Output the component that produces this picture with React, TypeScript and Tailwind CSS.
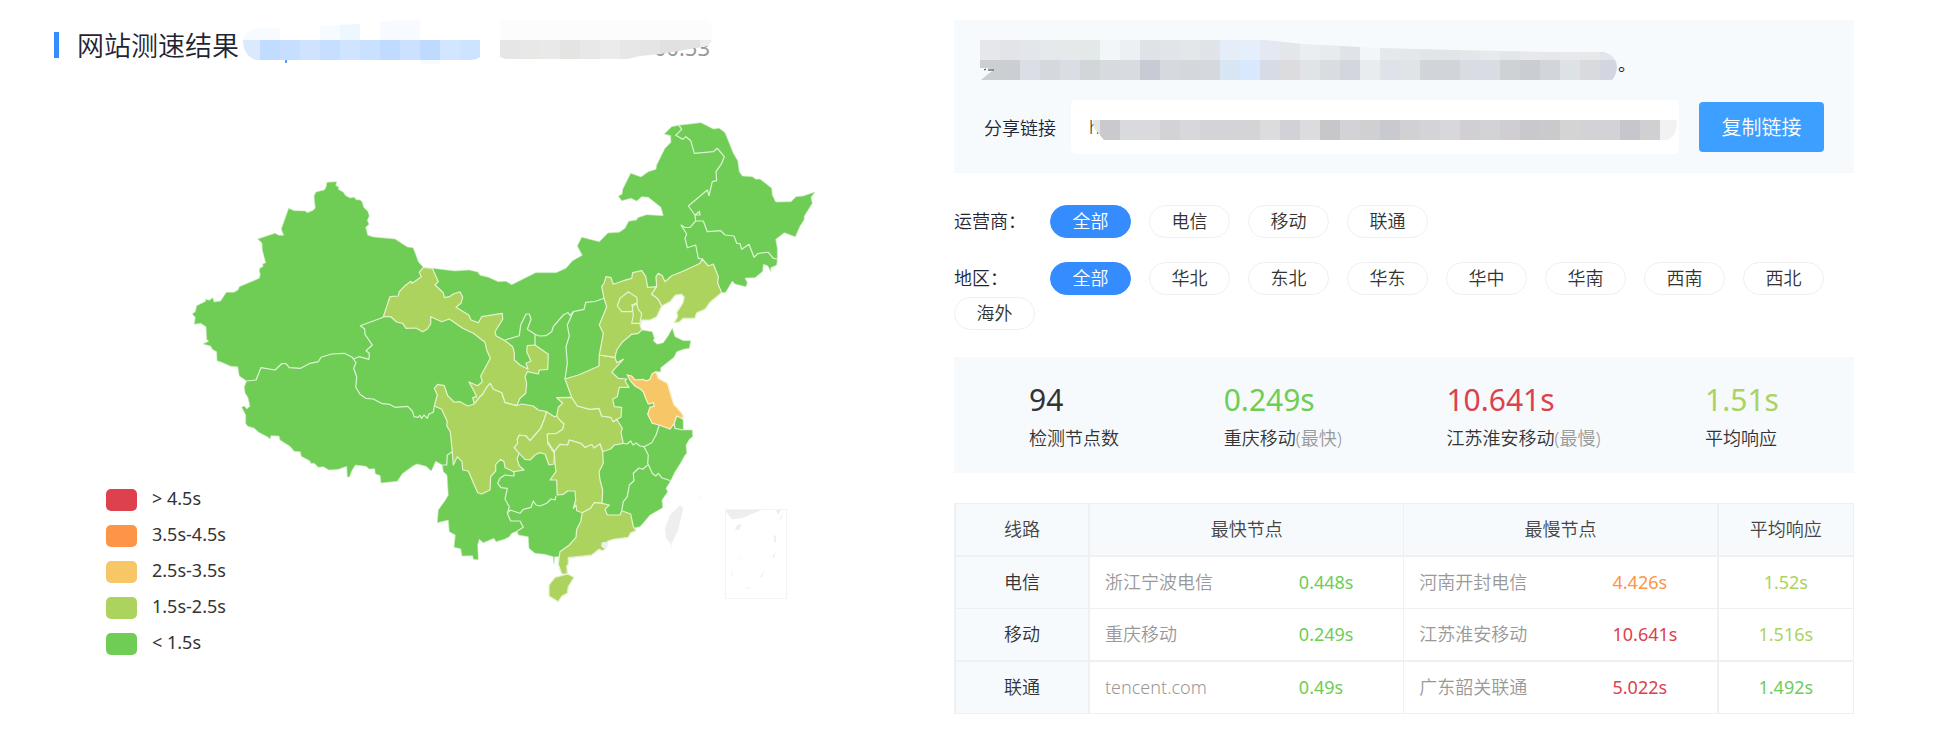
import React, { useState } from 'react';
import clsx from 'clsx';

const levels = [
  { label: '> 4.5s', swatch: 'bg-[#dd414d]' },
  { label: '3.5s-4.5s', swatch: 'bg-[#fd9549]' },
  { label: '2.5s-3.5s', swatch: 'bg-[#f6c667]' },
  { label: '1.5s-2.5s', swatch: 'bg-[#abd35e]' },
  { label: '< 1.5s', swatch: 'bg-[#6fcd56]' },
];

const carriers = ['全部', '电信', '移动', '联通'];
const regions = ['全部', '华北', '东北', '华东', '华中', '华南', '西南', '西北', '海外'];

const stats = [
  { value: '94', label: '检测节点数', note: '', color: 'text-[#333]' },
  { value: '0.249s', label: '重庆移动', note: '(最快)', color: 'text-[#6fcd56]' },
  { value: '10.641s', label: '江苏淮安移动', note: '(最慢)', color: 'text-[#dd414d]' },
  { value: '1.51s', label: '平均响应', note: '', color: 'text-[#abd35e]' },
];

const lines = [
  {
    name: '电信',
    fast: { node: '浙江宁波电信', time: '0.448s', color: 'text-[#6fcd56]' },
    slow: { node: '河南开封电信', time: '4.426s', color: 'text-[#fd9549]' },
    avg: { time: '1.52s', color: 'text-[#abd35e]' },
  },
  {
    name: '移动',
    fast: { node: '重庆移动', time: '0.249s', color: 'text-[#6fcd56]' },
    slow: { node: '江苏淮安移动', time: '10.641s', color: 'text-[#dd414d]' },
    avg: { time: '1.516s', color: 'text-[#abd35e]' },
  },
  {
    name: '联通',
    fast: { node: 'tencent.com', time: '0.49s', color: 'text-[#6fcd56]' },
    slow: { node: '广东韶关联通', time: '5.022s', color: 'text-[#dd414d]' },
    avg: { time: '1.492s', color: 'text-[#6fcd56]' },
  },
];

// mainland outline, filled with the "< 1.5s" colour
const outline =
  'M423.3 267.3 418.3 261.7 415.3 253.3 413 247.7 407.3 247 395 239 373.3 237 367.7 235.3 365.7 227.3 369 224.3 367.3 220.3 369.3 216 367.7 211.3 363.7 207.3 362 201.7 360 200 356 199.7 354.3 197.3 350 198 345.7 195.7 343.3 192.3 338.3 189.3 338.7 187.3 335.7 185.3 336.7 181.7 327 182.3 326 187.3 324.3 190 316 192 314 196 315.3 208 313.3 210.3 307.3 212.7 305.3 211 294.3 210.7 288.7 208.3 281.3 229 283.7 235.3 278.7 235.3 275 233.3 257.7 239 262 243 262.3 250 265.7 262.7 262.7 264 263 266.7 260 268 259.3 271 260.3 274 259.3 278.3 239.3 286.7 238.3 289.7 234 292.3 226.3 292.3 220.7 301 214 302 212.7 297.7 209.3 300.3 205.7 299.3 205.7 301.3 196.7 305.7 195.3 311.7 192.3 314 195.3 317.3 194.3 324.3 200.7 323.3 206 326.7 206.7 339.3 208.7 341.3 203 344 210.7 346 212.3 349.3 216.7 351.7 217 360.7 221.7 362.3 230.7 366.3 237.7 366.7 239.3 376 246.7 381 ' +
  '244.3 386.7 245 392.7 248 397.7 250 406.3 246.7 409 244.3 406 241.7 407.3 245.7 415 245.7 423.3 247.7 426.3 254 428 258.7 432.3 267.3 436.7 270 439 271 435.7 279 436 280 440 290 446.3 294.3 451.3 300.3 451.7 301.3 456.3 310 461 310.7 463.3 314.3 463.3 318.3 467.3 323.3 466.7 329 470 338.3 469.3 346.7 466.3 347.3 476.7 349.3 477.3 351.7 471 355.3 465 366 466.3 369.3 469 374.7 468.7 375.3 473.7 380.3 475.7 381 483 397.3 481.3 402.3 473.7 413.3 465.7 417 464 426 466.3 431.3 471 435.7 461.3 442.3 465 ' +
  '443.3 471.7 447 475 448.3 495 445 500.7 438.3 510 437.3 522.7 448.3 520 449.3 531.7 455.3 535 454 547.3 460.7 548.7 462 556 472.7 555.7 473.3 559.3 478.3 559.7 477.7 545 479.3 539.3 483.3 542.7 494 538.3 496 541.7 505 539 509.3 536.7 511.7 533.3 517.3 531 518.3 535 528.3 536.7 529 548.3 535 553.3 545 554.3 553.3 556.7 554 564 554.7 556.7 559.3 556.7 ' +
  '558.3 564 561.7 574 567.3 574 566.7 566 568.3 564 568.3 557.7 586.7 555.7 591.7 555 599 549.3 602.7 550.7 605.7 548.3 607.3 541.3 613.3 539.3 628.3 537.3 630.7 532.7 636 530.7 635 527.7 640 526.7 650 515 662.7 507.7 662 500 667.7 491.7 666 488.3 670.7 480.7 675 471.7 680 464 685 455 686.7 453.3 686 445 689.3 439.3 692.7 436.7 692.3 430 683.3 430 683 415 677.7 408.3 674 405 667.3 383.3 658.3 378.3 656 371.7 660.7 371.7 660.7 367.7 674 357.3 676.7 351.7 683.3 349.3 689.3 348.3 690.7 340.7 683.3 340.7 675 336.7 672.3 328.3 668.3 335.7 663.3 342.7 657.3 344.3 653.3 341 654.3 338.3 652.3 331.7 641.7 330 640 325 641.7 320 650 320 656.7 316.7 661.7 306 ' +
  '670 301.7 675.7 295 681.7 294.3 684.3 297.3 682.7 303.3 676.7 312.3 677.7 316.7 674 322.7 679.3 322 683.3 318.3 695 318 696.7 312.7 705 309.3 710 302.3 721.7 292.7 725.7 292.3 732.3 281 735 284 746 286.7 747.3 282.7 745 278 755 277.7 762.7 271.3 763.3 264.3 767.7 265.7 771 271.7 770.7 267.7 776.7 265 777.3 259 777.3 248.3 775.7 239.3 784.3 232.7 795.3 236.7 800 226 804 220 804.3 216 812.3 203.3 811 197.3 815 192 803.3 196 796 196.7 791 201.7 775.7 202 772.3 195 771.7 188.3 760 179 756 179.3 752.3 176.7 742.3 176 739.3 171.7 737.7 160.7 733.3 153.3 729.3 143.3 725 132.7 719.3 128.3 713.3 129 701 122.7 679 125.3 ' +
  '671.7 126.7 664.3 134 670.7 135.7 671 142.3 665 148.3 656.7 165 656 169.3 648.3 171.7 641 177 630.7 173.3 622.7 189.3 622 194.3 618.3 196 621.7 200.7 631 198.3 636.7 201 641.7 196.7 648.3 197.3 661 207.3 663.3 215.7 646.7 214.7 637.7 217.7 636.7 220 628.7 221.3 625 228.3 619.3 232.3 608 233 599.3 241.7 581.7 237.3 577.3 246 582.3 255.3 572.3 261 566 268.3 556 272.7 535.7 272.7 511.7 284.7 506 281.3 498.3 281.7 488.3 277.3 480 275.3 477.7 272 469 270 455 271 432.3 268.3 425 269Z';

// borders between two provinces of the same green
const borders = [
  'M383.3 317.3 360.3 325.7 364.7 329 365 334.3 372.3 345 366 350.7 369.3 353.3 369 359.3 359 356.7 353.3 359',
  'M353.3 359 352.3 357.3 344.3 353.3 331.7 354 321 357.3 318.3 361.7 309 363.7 300.7 368.3 289.3 367.7 286 363.7 281.7 363.7 275 370 261 367.7 256 380 246.7 381',
  'M353.3 359 356 362.7 353.7 368.3 356.7 376.7 355.7 387.3 360 394.3 365.7 398.3 373.3 399 382.3 403.7 389.3 404.3 395 407.3 407.7 406.3 412.3 411 414 416.7 418 417.3 420 415.3 421.7 418.5 424 415 427.3 418.3 429 414 433.3 412.3 434.3 406',
  'M442.3 465 446.7 465 447.3 455 452.3 451.7',
  'M505 340 519.3 335.7 520.7 325 526 314 529.3 314 531 319.3 527.3 329.3 535 334.3 535 345',
  'M535 334.3 539.3 336 546 335.7 551.7 331.7 553.3 326.7 563.3 315 568 312.5 570 315.5 573.3 311.7',
  'M573.3 311.7 567.3 325 569.3 336 566 346.7 567.3 363.3 565 379',
  'M573.3 311.7 584 309.3 585.7 302.3 595 301.5 604 298.3',
  'M659.3 425 656 435 651.7 442.7 644 446.7 648.3 455 647.7 463.3 652.3 473.3 655.7 476 658.3 473.3 661.7 477.7 670.7 480.7',
  'M623.3 443.3 627 444 630.7 441 633 445 636 443 640 446 644 446.7',
  'M647.7 465 642.7 469.3 639 468 633.3 473.3 634 480.7 629.3 485 627.3 496.7 623.3 501.7 621.7 510.7',
  'M514 470 514 476 505 475 500 478.3 497.7 483.3 501 487.7 507.3 488.3 505 499.3 509.3 506.7 507.3 513.3 510.7 521 520 521 523.3 527.3 517.3 531',
  'M556 496 555 500 551 499 546.7 503.3 540 506 536 505 533.3 501 531 507.3 523.3 509.3 520 513.3 510 510 507.3 513.3',
  'M674.3 423.3 675 428.3 683.3 430',
  'M702.3 259 698.3 258.3 695.7 245 687.3 247.7 685 238.3 686.7 234 681 225 685 227.5 690 227.3 695.7 221 695 215 688.3 206 707.3 190 709 195.7 712.3 181.7 716.7 180.7 716 171.7 721.7 163.3 724.3 156.7 717.3 148.3 713.3 151.7 694.3 153.3 690.7 140.7 686 136.7 682.7 139.3 675.7 135.3 681.7 129.3 679 125.3',
  'M695.7 221 703.3 221 707.3 231.7 720.7 230.7 725 235 734 236 736.7 243.3 740 243.5 741.7 249.3 749 244.3 754 257.3 758 253.5 765 252.5 768.3 252.3 773.3 258.3 777.3 259',
  'M695 215 699.5 211.5 700 215Z',
];

// provinces in the 1.5s-2.5s band
const limeAreas = [
  // Gansu
  'M423.3 267.3 419.3 272.3 421.3 276.7 412.3 283.3 411 281.3 405 285.7 399.3 291.7 398.3 296 390 296.7 383.3 316.7 390.7 316.7 396.7 322 402.7 323.3 406 328.3 416 328 422.7 331.7 427.3 329 430.7 324 430.7 316.7 441.7 321.7 449.3 319 462.7 328.3 473.3 333.3 485 342.3 486.7 350 490.3 358.3 486.7 365 480.7 376 482.3 381.7 477.7 385.7 469 382 474.3 391.7 476.7 396.7 472.7 397.7 474.3 404 480 396.7 482.7 394.3 486.7 387.3 490 383.3 493.3 389.3 501.7 392.7 505 402.7 516.7 405.7 520 398.3 525.7 393.3 526.7 383.3 525 376.7 527.3 371.7 538.3 374 539.3 370 547.7 369.3 548.3 354.3 535 345 527.3 345.7 526.7 351.7 531 361 526 363.3 528 369.3 520 365 514.3 360 514.3 352.7 512.7 346.7 505 340.7 496 335.7 495 331.7 502.7 319.3 502.3 313.3 481.7 316.7 478.3 322.7 471 320 468.7 315 456 307.3 461 303.3 462.7 297.3 460 291.7 453.3 294 449.3 296.7 444.3 297.7 443.3 292.7 435 285 438.3 281.7 432.3 268.3Z',
  // Sichuan
  'M434.3 406 441.7 409.3 447.3 421.7 446.7 425.7 450.3 431.7 452.3 451.7 453.3 465 457.3 456.7 462 461.7 462.7 470 468.3 471 477.7 492.7 481.7 494 490 490 490.7 476.7 495.7 471 495.7 464.3 500.7 459.3 504 461.7 505 467.7 514 471.7 524 470 519.3 465.7 517 459 519.3 453.3 514.3 447.7 517.7 443.3 517.3 439.3 519.3 435 526 436 530 440.7 535 435 540.7 428.3 544 420 546.7 411.7 538.3 410 533.3 406 521.7 404 516.7 405.7 505 402.7 501.7 392.7 493.3 389.3 490 383.3 486.7 387.3 482.7 394.3 480 396.7 474.3 404 467.7 406 460 401.7 454 402 447.7 395.7 444.3 385.7 437.7 384.3 434.3 388.3 437.3 395Z',
  // Chongqing
  'M546.7 411.7 554.3 416.7 558.3 416 559.3 419.3 564 424 562.7 429.3 556.7 433.3 547.3 434 547.7 443.3 554.3 453.3 554 464 549 465 545 454 539.3 452.7 535 455 530 460 525 459.3 519.3 453.3 514.3 447.7 517.7 443.3 517.3 439.3 519.3 435 526 436 530 440.7 535 435 540.7 428.3 544 420Z',
  // Hubei
  'M571.7 397.3 556.7 397.7 562.7 403.3 558.3 407.3 556.7 416 559.3 419.3 564 424 562.7 429.3 556.7 433.3 547.3 434 547.7 441.7 554.3 451.7 560 444.3 567.7 445 569.3 440 580.7 443.3 585 447.5 591.7 444.5 594 448 600 444 602.7 451.7 610.7 449 614.3 445 623.3 443.3 621 432.7 622.3 428.3 616.7 419.3 613.3 421.7 610.7 417.3 601.7 416 599 408.3 590 409.3 577.3 406Z',
  // Hunan
  'M554.3 451.7 555 463.3 556 471.7 550 480 556.7 480 557.3 495 563.3 494.3 567.7 491 575 491 575.7 500 573.3 508.3 576 505 576.7 510.7 582.3 512.7 590.7 508.3 594.3 502.7 602 503.3 602.7 490 600 480 599 471.7 603.3 463.3 602.7 451.7 600 444 594 448 591.7 444.5 585 447.5 580.7 443.3 569.3 440 567.7 445 560 444.3Z',
  // Henan
  'M565 379 571.7 397.3 577.3 406 590 409.3 599 408.3 601.7 416 610.7 417.3 613.3 421.7 616.7 419.3 621 417.3 621.7 407.3 614.3 406.7 612.7 399.3 617.3 396.7 619.3 387.3 629 387.3 625 381 626.7 379 618.3 378.3 611.7 372.3 615 368.3 623.3 359.3 616.7 362.7 615 357.3 599.3 355 599 366 588.3 370.7 578.3 375Z',
  // Hebei
  'M656.7 286.7 647.7 287.3 645.7 276.7 641.7 270.7 632.7 272.7 631.7 278.3 623.3 280.7 613.3 284.3 611 277.7 606 276.7 604 283.3 601.7 286.7 604 298.3 606.7 306.7 599.3 325 603.3 333.3 599.3 355 615 357.3 616.7 350 622.7 341.7 631.7 334.3 638.3 333.3 641.7 330 640 325 641.7 320 650 320 656.7 316.7 661.7 306 658.3 299.3 651.7 294Z',
  // Beijing
  'M620 298.3 623 296 628.3 291.7 636.7 297.3 637.3 302.7 631.7 305 633.3 308 631.7 311.7 621.7 311.7 617.3 306Z',
  // Tianjin
  'M636.7 303.3 638.3 309.3 641.7 313.3 640 323.3 631.7 323.3 633.3 315 632.3 306.7Z',
  // Liaoning
  'M656.7 286.7 651.7 294 658.3 299.3 661.7 306 670 301.7 675.7 295 681.7 294.3 684.3 297.3 682.7 303.3 676.7 312.3 677.7 316.7 674 322.7 679.3 322 683.3 318.3 695 318 696.7 312.7 705 309.3 710 302.3 721.7 292.7 717.7 283.3 718.3 276.7 713.3 264 708.3 266 702.3 259 700 263.3 691.7 267.3 681.7 271.7 671.7 275.7 665 281.7 662.3 275.7 658.3 273.3 656 276.7Z',
  // Guangdong
  'M582.3 512.7 580.7 521.7 576.7 529.3 576 537.3 569.3 545 560 551.7 559.3 556.7 558.3 564 561.7 574 567.3 574 566.7 566 568.3 564 568.3 557.7 586.7 555.7 591.7 555 599 549.3 602.7 550.7 605.7 548.3 607.3 541.3 613.3 539.3 628.3 537.3 630.7 532.7 636 530.7 633.3 526.7 630.7 514 621.7 510.7 620 515 607.3 515 605 509.3 609.3 505 602 503.3 594.3 502.7 590.7 508.3Z',
  // Hainan
  'M555 577.3 567.7 574 574 577.3 568.3 586.7 567.3 593.3 562 596 558.3 601.7 549 596 549 585Z',
];

const jiangsu =
  'M627.3 375 631.7 376 635 380 643.3 379.3 646 381 650 379.3 652 374 656 371.7 658.3 378.3 667.3 383.3 674 405 677.7 408.3 683 415 683 419 676.7 416 674.3 423.3 670 429 659.3 425 652.3 423.3 647.7 414.3 650 407.3 654.3 406 653.3 402.7 648.3 404 645.7 398.3 643.3 391.7 640.7 389.3 635 386 631 381.7Z';

const ChinaMap: React.FC = () => (
  <svg viewBox="54 70 900 620" className="block w-full" role="img" aria-label="全国测速地图">
    <path d={outline} fill="#6fcd56" stroke="#c4eab9" strokeWidth="0.6" />
    <g fill="none" stroke="#def4d6" strokeWidth="1.2" strokeLinejoin="round">
      {borders.map((d) => (
        <path key={d} d={d} />
      ))}
    </g>
    <g fill="#abd35e" stroke="#e6f3cf" strokeWidth="1.2" strokeLinejoin="round">
      {limeAreas.map((d) => (
        <path key={d} d={d} />
      ))}
    </g>
    <path d={jiangsu} fill="#f6c667" stroke="#fdf0d5" strokeWidth="1.2" />
    <g fill="#eee">
      <path d="M680 505 683.3 508.3 678.3 530 671.7 543.3 671.3 549.3 670.7 544 666 538.3 665 528.3 670 515Z" />
      <circle cx="604.5" cy="545" r="3.2" />
      <path d="M725.7 511 728 509.3 763.3 509.3 741.7 518.3 731.7 519.3ZM776 510h5l-3 5ZM737 525l5-1-3 6-4 0ZM784 511l-5 9 2-1ZM774 536l2-1v7h-2ZM776 552l-4 5 2 1ZM765 570l-5 7 2 0ZM742 555l-5 4 1 0ZM731 571l1 6 1-1ZM744 587l8 1-3 1ZM698 498l4-2-2 2Z" />
    </g>
    <rect x="725.5" y="509.5" width="61" height="89" fill="none" stroke="#f3f3f3" />
  </svg>
);

interface MosaicRowProps {
  x: number;
  y: number;
  colors: string[];
}

const MosaicRow: React.FC<MosaicRowProps> = ({ x, y, colors }) => (
  <>
    {colors.map((c, i) => (
      <rect key={i} x={x + i * 20} y={y} width="20" height="20" fill={'#' + c} />
    ))}
  </>
);

const titleBlue = 'dbe9fd c2dcff c6deff cfe3ff c6deff d0e4ff c9e0ff c0dbff cbe1ff bfdaff d3e6ff cce4ff'.split(' ');
const titleGray = 'e6e6e6 e8e8e7 e9e9e9 e4e5e3 e8e8e8 ebebeb e7e7e7 e5e5e5 e0e1e0 e1e2e2 ededed'.split(' ');
const infoTop =
  'e6e7ea e2e4e9 e3e6eb e6e9ec e5e9ea e3e8e9 f1f6f9 ecf0f3 dfe2e6 e1e4e8 e3e7ea e0e3e8 e5eef8 e4effb e4e8f2 e3e7e9 eaeef1 e7ebed e0e4e9 f1f6f9 e5e9ec e4e8ea e1e5e8 e2e5e8 e3e7e9 e7eaec e3e6e9 e6e8ea e5e7e8 e6e8ea e7e8e9 e2e5ec'.split(' ');
const infoBottom =
  'cbcfd1 cacfd3 dbdee4 d5d9de dadde3 d1d6d9 d7dadf d8dce0 c8cbd4 d6d9de d4d7dc d5d8dc d8e5f3 d9e9fd d6dbe5 dcdcdf e0e4e7 d9dce1 d3d6dc e8ecef dfe2e8 e0e4e6 d1d4d9 d1d4d9 d9dce3 d9dce3 ced2d4 cacdd2 d2d5da dce2e6 d9dade d3d6e1'.split(' ');
const linkMask =
  'e4e4e6 c9c9ce d8dade dadade d3d3d5 d8d8dc d3d3d8 d3d3d8 d4d4d6 dcdcde d1d1d7 dcdcdf c7c7c9 d3d3d7 d0d0d3 c9c9d0 d1d1d3 d4d4d8 d8d8dc d1ced4 d3d3d6 d0ced3 c9c9cd cacacd d4d4d5 d2d2d7 d2d2d7 c8c6cd d8d8dd d0d0d3 f2f2f4'.split(' ');

interface FilterRowProps {
  label: string;
  options: string[];
}

const FilterRow: React.FC<FilterRowProps> = ({ label, options }) => {
  const [active, setActive] = useState(options[0]);

  return (
    <div className="flex flex-wrap items-center gap-x-[18px] gap-y-0.5" role="group" aria-label={label}>
      <span className="w-[78px] whitespace-nowrap text-[#1f2333]">{label}：</span>
      {options.map((option) => (
        <button
          key={option}
          type="button"
          onClick={() => setActive(option)}
          className={clsx(
            'h-[33px] w-[81px] cursor-pointer rounded-full border leading-[27px]',
            option === active ? 'border-[#358cff] bg-[#358cff] text-white' : 'border-[#f0f0f0] bg-white text-[#333]'
          )}
        >
          {option}
        </button>
      ))}
    </div>
  );
};

interface NodeCellProps {
  node: string;
  time: string;
  color: string;
}

const NodeCell: React.FC<NodeCellProps> = ({ node, time, color }) => (
  <div className="flex">
    <span className="w-2/3 pl-[15px] text-[#999]">{node}</span>
    <span className={clsx('font-normal', color)}>{time}</span>
  </div>
);

export default function App() {
  return (
    <main className="grid grid-cols-2 bg-white pt-5 pr-[89px] pb-6 pl-[54px] font-['Noto_Sans','Noto_Sans_CJK_SC',sans-serif] text-[18px] leading-[27px] font-[350] text-[#333]">
      <section>
        <header className="flex h-[50px] items-center">
          <span className="mr-[18px] h-[26px] w-[5px] bg-[#358cff]" />
          <h1 className="w-[163px] pt-0.5 text-[27px] leading-10 font-[350] whitespace-nowrap text-[#1f2333]">网站测速结果</h1>
          <div className="relative flex h-[50px] w-[472px] items-center justify-end">
            <span className="pt-1 pr-0.5 text-[22px] font-normal text-[#999]">00:53</span>
            <svg viewBox="240 20 472 50" className="absolute inset-0 h-full w-full" aria-hidden="true">
              <clipPath id="title-blue">
                <path d="M243 20H480V57Q476 60 470 60H256Q243 56 243 40Z" />
              </clipPath>
              <clipPath id="title-gray">
                <path d="M500 40H712L708 46 690 49 660 54 640 56 628 59H506L500 57Z" />
              </clipPath>
              <path d="M243 40Q245 28 262 28H280V40ZM320 40V26L360 24V40ZM380 40V22L400 20H420V40ZM420 60h20v4h-18Z" fill="#f7fbff" />
              <path d="M340 40V25L360 24V40Z" fill="#eef6ff" />
              <path d="M500 20H708Q714 24 714 40H500Z" fill="#fcfcfc" />
              <path d="M285 60h2v3h-2ZM319 59h2v1h-2ZM330 59h3v1h-3Z" fill="#5a9df5" />
              <g clipPath="url(#title-blue)">
                <MosaicRow x={240} y={40} colors={titleBlue} />
              </g>
              <g clipPath="url(#title-gray)">
                <MosaicRow x={500} y={40} colors={titleGray} />
              </g>
            </svg>
          </div>
        </header>

        <div className="relative">
          <ChinaMap />
          <ul className="absolute bottom-[35px] left-[52px] flex flex-col gap-[14px] font-normal">
            {levels.map((level) => (
              <li key={level.label} className="flex h-[22px] items-center gap-[15px]">
                <span className={clsx('h-[22px] w-[31px] rounded-[5px]', level.swatch)} />
                <span className="pb-1">{level.label}</span>
              </li>
            ))}
          </ul>
        </div>
      </section>

      <section>
        <div className="bg-[#f6fafd] pt-5 pr-[30px] pb-[19px] pl-[26px]">
          <p className="flex h-10 items-center">
            <svg viewBox="980 40 638 40" className="h-10 w-[638px]" aria-hidden="true">
              <clipPath id="info">
                <path d="M980 40H1265L1303 44 1380 48 1455 50 1550 52H1604Q1617 56 1617 68 1616 76 1612 80H981L988 74 994 70 986 68H980Z" />
              </clipPath>
              <g clipPath="url(#info)">
                <MosaicRow x={980} y={40} colors={infoTop} />
                <MosaicRow x={980} y={60} colors={infoBottom} />
              </g>
              <path d="M984 70l2-1M988 70h6" stroke="#333" />
            </svg>
            <span className="pt-2 font-normal text-[#1f2333]">。</span>
          </p>
          <div className="mt-5 flex items-center">
            <label htmlFor="share-link" className="ml-1 w-[87px] pt-0.5 text-[#1f2333]">
              分享链接
            </label>
            <div className="relative flex-1">
              <input
                id="share-link"
                readOnly
                defaultValue="h"
                className="block h-[54px] w-full rounded-[5px] bg-white px-[18px] text-[18px] text-[#333] outline-none"
              />
              <svg viewBox="1093 120 586 20" className="absolute top-5 right-0 h-5 w-[586px]" aria-hidden="true">
                <clipPath id="link">
                  <path d="M1093 120H1677Q1678 134 1668 140H1104L1094 128Z" />
                </clipPath>
                <g clipPath="url(#link)">
                  <MosaicRow x={1080} y={120} colors={linkMask.slice(0, 1)} />
                  <MosaicRow x={1100} y={120} colors={linkMask.slice(1, 29)} />
                  <MosaicRow x={1640} y={120} colors={linkMask.slice(29)} />
                </g>
              </svg>
            </div>
            <button type="button" className="ml-5 h-[50px] w-[125px] cursor-pointer rounded bg-[#3d9fff] text-[20px] text-white">
              复制链接
            </button>
          </div>
        </div>

        <div className="mt-8 flex flex-col gap-6">
          <FilterRow label="运营商" options={carriers} />
          <FilterRow label="地区" options={regions} />
        </div>

        <dl className="mt-[27px] flex h-[116px] items-center justify-between bg-[#f6fafd] px-[75px] pt-0.5">
          {stats.map((stat) => (
            <div key={stat.label} className="flex flex-col-reverse gap-[5px]">
              <dt>
                {stat.label}
                {stat.note && <span className="text-[#999]">{stat.note}</span>}
              </dt>
              <dd className={clsx('text-[30px] leading-10 font-normal', stat.color)}>{stat.value}</dd>
            </div>
          ))}
        </dl>

        <table className="mt-[30px] w-full table-fixed border-separate border-spacing-0 border-t border-l-2 border-[#eff0f2]">
          <thead>
            <tr className="bg-[#f6fafd] text-[#444]">
              <th scope="col" className="h-[53px] w-[134px] border-r-2 border-b-2 border-[#eff0f2] font-[350]">线路</th>
              <th scope="col" className="w-[35%] border-r border-b-2 border-[#eff0f2] font-[350]">最快节点</th>
              <th scope="col" className="w-[35%] border-r-2 border-b-2 border-[#eff0f2] font-[350]">最慢节点</th>
              <th scope="col" className="border-r border-b-2 border-[#eff0f2] font-[350]">平均响应</th>
            </tr>
          </thead>
          <tbody className="[&>tr:nth-child(2)>*]:h-[53px] [&>tr:nth-child(2)>*]:border-b-2">
            {lines.map((line) => (
              <tr key={line.name}>
                <th scope="row" className="h-[52px] border-r-2 border-b border-[#eff0f2] bg-[#f6fafd] font-[350]">
                  {line.name}
                </th>
                <td className="border-r border-b border-[#eff0f2]">
                  <NodeCell {...line.fast} />
                </td>
                <td className="border-r-2 border-b border-[#eff0f2]">
                  <NodeCell {...line.slow} />
                </td>
                <td className={clsx('border-r border-b border-[#eff0f2] text-center font-normal', line.avg.color)}>{line.avg.time}</td>
              </tr>
            ))}
          </tbody>
        </table>
      </section>
    </main>
  );
}
